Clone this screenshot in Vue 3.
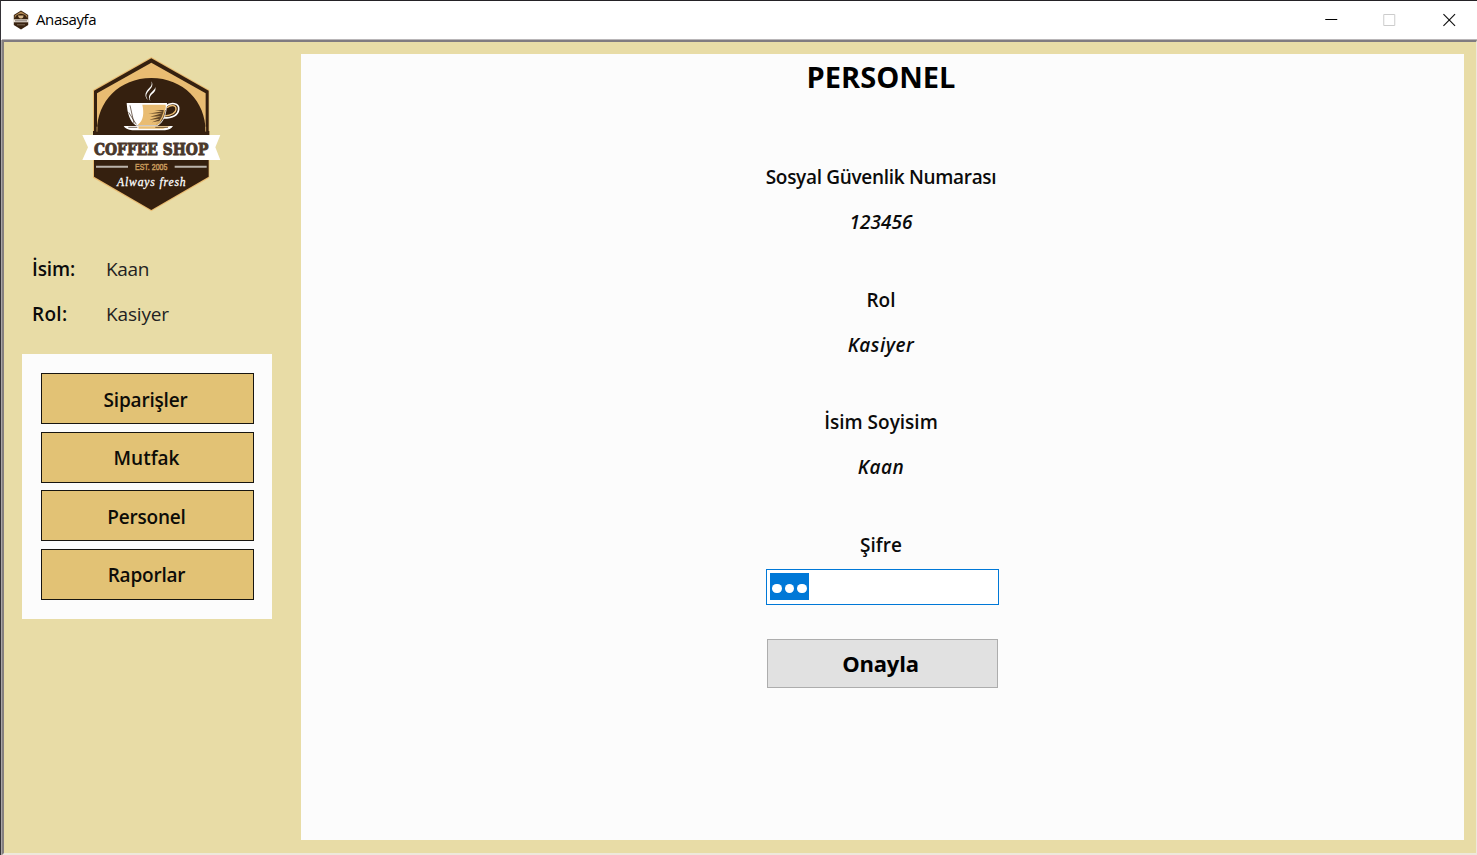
<script setup>
const menu = [
  { label: 'Siparişler', cls: 'siparisler' },
  { label: 'Mutfak', cls: 'mutfak' },
  { label: 'Personel', cls: 'personel' },
  { label: 'Raporlar', cls: 'raporlar' },
]
const fields = [
  { label: 'Sosyal Güvenlik Numarası', value: '123456', cls: 'ssn' },
  { label: 'Rol', value: 'Kasiyer', cls: 'role' },
  { label: 'İsim Soyisim', value: 'Kaan', cls: 'name' },
]
</script>

<template>
  <div class="window">
    <header class="titlebar">
      <svg class="app-icon" viewBox="0 0 16 20">
        <path d="M8 .5 15.2 5v10L8 19.5.8 15V5Z" fill="#38220f" />
        <path d="M8 1.5 14.3 5.5v3Q13 4 8 3.700Q3 4 1.700 8.500v-3Z" fill="#b48a55" />
        <path d="M5 5.500h5.500q0 3-2.500 3T5 5.500Z" fill="#d8b88a" />
        <path d="M0 9.300h16v3H0Z" fill="#eee7dd" />
        <path d="M2 10.800h12" stroke="#8c8178" stroke-width="1.200" />
        <path d="M4 14.800h8" stroke="#8e7a68" stroke-width=".8" />
      </svg>
      <span class="title">Anasayfa</span>
      <div class="controls">
        <svg viewBox="0 0 58 38"><path d="M25 18.500h12" stroke="#000" fill="none" /></svg>
        <svg viewBox="0 0 58 38"><path d="M25.500 13.500h11v11h-11Z" stroke="#ccc" fill="none" /></svg>
        <svg viewBox="0 0 58 38"><path d="m26.200 13.200 11.600 11.600m0-11.600-11.600 11.600" stroke="#111" stroke-width="1.150" fill="none" /></svg>
      </div>
    </header>

    <div class="client">
      <aside class="sidebar">
        <svg class="logo" viewBox="0 0 465 510">
          <path d="M229 21 403 120V383L229 484 54 383V120Z" fill="#e9bc72" />
          <path d="M229 25 401 122V380L229 480 57 380V122Z" fill="#35200f" />
          <path d="M229 38 392 130V245H66V130Z" fill="#e9bc72" />
          <path d="M54 258V243H66C66 155 133 84 229 84S392 155 392 243H403V258Z" fill="#35200f" />
          <path d="M66 230V245M392 230V245" stroke="#e9bc72" stroke-width="2" />
          <path d="M229 94C239 109 223 118 216 130 211 139 216 144 219 151 205 137 213 124 222 115 229 108 232 104 229 94Z" fill="#fff" />
          <path d="M240 110C247 126 229 129 225 141 223 146 225 149 226 153 216 139 227 129 234 122 238 118 241 115 240 110Z" fill="#fff" />
          <path d="M272 169C288 155 313 159 311 178 309 197 290 204 265 204" fill="none" stroke="#fff" stroke-width="5" />
          <path d="M276 173C290 162 304 166 303 178 302 189 287 196 269 198" fill="none" stroke="#e9bc72" stroke-width="4" />
          <path d="M155 159H276C276 193 265 218 248 227H184C164 216 157 190 155 159Z" fill="#fff" />
          <path d="M202 164H272C271 194 262 216 247 225H188C207 210 207 187 202 164Z" fill="#e9bc72" />
          <path d="M239 180H272C271 193 264 213 251 222L243 224 253 213 231 217 254 207 223 209 258 199 225 200 261 190 220 191 263 184Z" fill="#35200f" opacity=".75" />
          <path d="M270 168C268 197 258 213 245 225" fill="none" stroke="#e9bc72" stroke-width="4" />
          <path d="M165 166 177 220M161 187 184 223" stroke="#35200f" stroke-width="2" />
          <path d="M146 228H294Q287 239 270 241H172Q151 238 146 228Z" fill="#fff" />
          <path d="M190 229H286L264 236H191Z" fill="#e9bc72" />
          <path d="M160 232H187M241 232H279" stroke="#35200f" stroke-width="2" />
          <path d="M22 255H436L421 292 436 330H22L39 292Z" fill="#fff" />
          <text class="brand" x="57" y="315" textLength="343" lengthAdjust="spacingAndGlyphs">COFFEE SHOP</text>
          <text class="est" x="180" y="360" textLength="97" lengthAdjust="spacingAndGlyphs">EST. 2005</text>
          <path d="M63 350H159M299 350H395" stroke="#bcb4ac" stroke-width="6" />
          <text class="fresh" x="126" y="407" textLength="206" lengthAdjust="spacing">Always fresh</text>
        </svg>

        <dl class="user">
          <dt class="isim">İsim:</dt><dd class="kaan">Kaan</dd>
          <dt class="rol">Rol:</dt><dd class="kasiyer">Kasiyer</dd>
        </dl>

        <nav class="menu">
          <button v-for="m in menu" :key="m.label"><span :class="m.cls">{{ m.label }}</span></button>
        </nav>
      </aside>

      <main class="panel">
        <h1>PERSONEL</h1>
        <section v-for="f in fields" :key="f.label" class="field" :class="f.cls">
          <div class="label">{{ f.label }}</div>
          <div class="value">{{ f.value }}</div>
        </section>
        <div class="label sifre">Şifre</div>
        <div class="password"><span class="selection"><i /><i /><i /></span></div>
        <button class="confirm">Onayla</button>
      </main>
    </div>
  </div>
</template>

<style>
body { margin: 0; overflow: hidden; background: #fff; }
</style>

<style scoped>
* { box-sizing: border-box; }
.window {
  width: 1477px; height: 855px; display: flex; flex-direction: column;
  border-top: 1px solid #242226; border-left: 1px solid #343237;
  background: #fff; color: #0b0b0b;
  font-family: "Open Sans", "Noto Sans", sans-serif;
}
.titlebar { height: 38px; flex: none; display: flex; align-items: center; padding-left: 12px; }
.app-icon { width: 16px; height: 20px; }
.title { margin: -2px 0 0 7px; font-size: 15px; letter-spacing: -.4px; color: #000; }
.controls { margin-left: auto; display: flex; margin-right: 2px; }
.controls svg { width: 58.500px; height: 38px; }
.client {
  height: 815px; width: 1475px; flex: none; display: flex;
  border-top: 2px solid #807b80; border-left: 2px solid #85807f;
  border-bottom: 2px solid #eee8dc; border-right: 1px solid #eee8dc;
  box-shadow: 0 -1px #b9b6b8, -1px 0 #aaa6a6;
  background: #e8dca6; margin: 1px 0 0 1px;
}
.sidebar { width: 297px; flex: none; display: flex; flex-direction: column; padding-left: 18px; }
.logo { width: 155px; height: 170px; margin: 8px 0 0 53px; flex: none; }
.brand { font: 700 50px "DejaVu Serif", serif; fill: #4a382c; stroke: #4a382c; stroke-width: 3; }
.est { font: 400 29px "Liberation Sans", sans-serif; fill: #c99b5c; stroke: #c99b5c; stroke-width: 1.5; }
.fresh { font: italic 400 35px "Liberation Serif", serif; fill: #fff; stroke: #fff; stroke-width: .8; }
.user {
  display: grid; grid-template-columns: 74px 1fr; grid-auto-rows: 45px;
  align-items: center; margin: 26px 0 0 10px; font-size: 19px;
}
.user dt { font-weight: 600; letter-spacing: -.1px; }
.user .rol { letter-spacing: .3px; }
.user dd { margin: 0; color: #222; letter-spacing: -.35px; }
.user .kasiyer { letter-spacing: -.15px; }
.menu {
  width: 250px; height: 265px; margin-top: 18px; padding: 19px 18px 0 19px;
  display: flex; flex-direction: column; gap: 7.670px; background: #fcfcfc;
}
.menu button {
  height: 51px; width: 213px; flex: none; padding: 2px 2px 0 0;
  border: 1px solid #171510; outline: 0; background: #e2c275;
  font: 600 19px "Open Sans", sans-serif; color: #0d0c08;
}
.menu .siparisler { letter-spacing: -.2px; margin-right: 2px; }
.menu .personel, .menu .raporlar { letter-spacing: -.2px; }
.panel {
  width: 1163px; height: 786px; margin-top: 12px; padding-right: 3px; background: #fcfcfc;
  display: flex; flex-direction: column; align-items: center;
}
h1 { margin: 3px 0 0; height: 40px; line-height: 40px; font-size: 29px; font-weight: 700; color: #000; }
.field { height: 122.500px; text-align: center; }
.ssn { margin-top: 58px; }
.label, .value { height: 45px; line-height: 45px; font-size: 19px; font-weight: 600; white-space: nowrap; }
.ssn .label { letter-spacing: -.31px; }
.value { font-style: italic; }
.role .value, .name .value { letter-spacing: .5px; }
.sifre { height: 46px; }
.password { width: 233px; height: 36px; margin: 0 0 0 3px; border: 1px solid #0078d7; background: #fff; padding: 3px; }
.selection { display: flex; align-items: center; width: 39px; height: 27px; padding: 5px 0 0 2px; gap: 3px; background: #0078d7; }
.selection i { width: 9.500px; height: 9.500px; border-radius: 50%; background: #fff; }
.confirm {
  width: 231px; height: 49px; margin: 34px 0 0 3px; padding: 0 4px 0 0;
  border: 1px solid #adadad; background: #e1e1e1; color: #000;
  font: 700 22px "Open Sans", sans-serif; letter-spacing: -.2px;
}
</style>
